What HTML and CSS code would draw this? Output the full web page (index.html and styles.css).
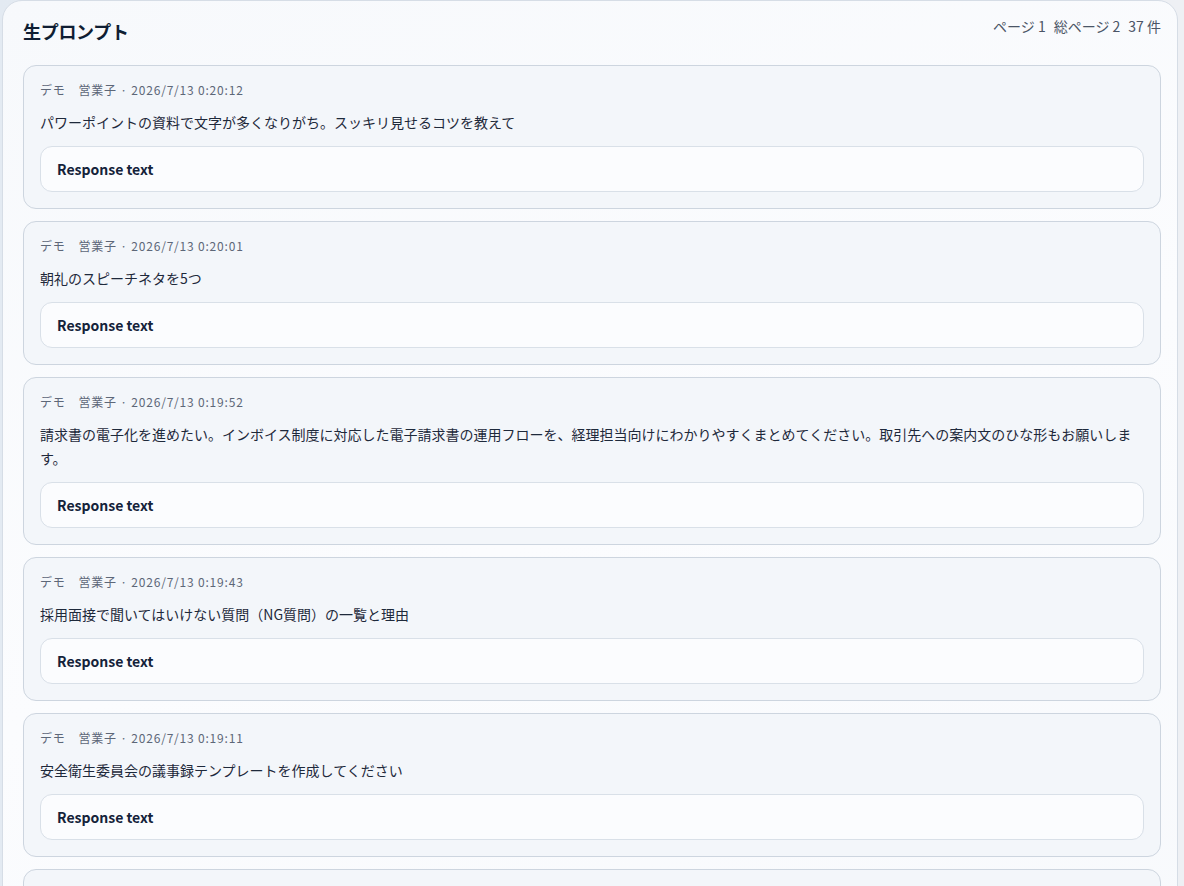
FILE: index.html
```html
<!DOCTYPE html>
<html lang="ja">
<head>
<meta charset="utf-8">
<title>生プロンプト</title>
<link rel="stylesheet" href="styles.css">
</head>
<body>
<div class="page">
  <section class="panel">
    <header class="panel-head">
      <h1 class="title">生プロンプト</h1>
      <div class="pager"><span>ページ 1</span><span>総ページ 2</span><span>37 件</span></div>
    </header>
    <div class="list">
      <article class="card">
        <div class="meta">デモ　営業子 · 2026/7/13 0:20:12</div>
        <p class="prompt">パワーポイントの資料で文字が多くなりがち。スッキリ見せるコツを教えて</p>
        <div class="response">Response text</div>
      </article>
      <article class="card">
        <div class="meta">デモ　営業子 · 2026/7/13 0:20:01</div>
        <p class="prompt">朝礼のスピーチネタを5つ</p>
        <div class="response">Response text</div>
      </article>
      <article class="card">
        <div class="meta">デモ　営業子 · 2026/7/13 0:19:52</div>
        <p class="prompt">請求書の電子化を進めたい。インボイス制度に対応した電子請求書の運用フローを、経理担当向けにわかりやすくまとめてください。取引先への案内文のひな形もお願いします。</p>
        <div class="response">Response text</div>
      </article>
      <article class="card">
        <div class="meta">デモ　営業子 · 2026/7/13 0:19:43</div>
        <p class="prompt">採用面接で聞いてはいけない質問（NG質問）の一覧と理由</p>
        <div class="response">Response text</div>
      </article>
      <article class="card">
        <div class="meta">デモ　営業子 · 2026/7/13 0:19:11</div>
        <p class="prompt">安全衛生委員会の議事録テンプレートを作成してください</p>
        <div class="response">Response text</div>
      </article>
      <article class="card">
        <div class="meta">デモ　営業子 · 2026/7/13 0:18:40</div>
        <p class="prompt">社内報の新年挨拶文を考えて</p>
        <div class="response">Response text</div>
      </article>
    </div>
  </section>
</div>
</body>
</html>
```

FILE: styles.css
```css
html, body {
  margin: 0;
  padding: 0;
  height: 100%;
  overflow: hidden;
}
body {
  background: linear-gradient(90deg, #e3eaf2 0%, #eef2f7 50%, #eef0f4 100%);
  font-family: "Noto Sans CJK JP", "Noto Sans", sans-serif;
  color: #1e293b;
}
.page {
  padding: 0 6px 0 2px;
}
.panel {
  background: linear-gradient(160deg, #f7f9fc 0%, #fbfcfe 50%, #f7f9fc 100%);
  border: 1px solid #d6dde6;
  border-radius: 20px;
  padding: 14px 16px 24px 20px;
  min-height: 1000px;
  box-sizing: border-box;
}
.panel-head {
  display: flex;
  justify-content: space-between;
  align-items: flex-start;
  margin-bottom: 20px;
}
.title {
  margin: 2px 0 0;
  font-size: 18px;
  line-height: 28px;
  font-weight: 700;
  color: #0f1e33;
  letter-spacing: -0.3px;
}
.pager {
  display: flex;
  gap: 8px;
  font-size: 14px;
  line-height: 24px;
  color: #4b5566;
  margin-top: -1px;
}
.list {
  display: flex;
  flex-direction: column;
  gap: 12px;
}
.card {
  background: #f3f6fa;
  border: 1px solid #cdd5df;
  border-radius: 13px;
  padding: 15px 16px 16px 16px;
}
.meta {
  font-size: 12px;
  line-height: 18px;
  color: #5d6778;
  letter-spacing: 0.8px;
}
.prompt {
  margin: 11px 0 12px;
  font-size: 14px;
  line-height: 24px;
  color: #1e293b;
}
.response {
  background: #fbfcfe;
  border: 1px solid #d9e0e8;
  border-radius: 12px;
  padding: 0 16px;
  height: 44px;
  display: flex;
  align-items: center;
  font-size: 14px;
  font-weight: 700;
  color: #14223a;
}
```
